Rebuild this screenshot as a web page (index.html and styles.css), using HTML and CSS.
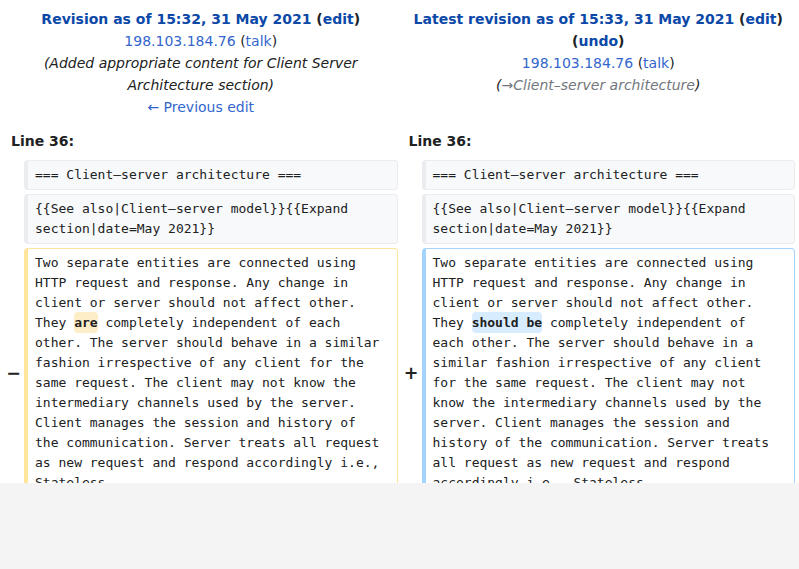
FILE: index.html
```html
<!DOCTYPE html>
<html lang="en">
<head>
<meta charset="utf-8">
<title>Difference between revisions</title>
<link rel="stylesheet" href="styles.css">
</head>
<body>
<div class="page">
  <div class="diff">
    <div class="hdr hdr-old">
      <div class="title"><a href="#" class="rev">Revision as of 15:32, 31 May 2021</a> (<a href="#" class="rev">edit</a>)</div>
      <div><a href="#">198.103.184.76</a> (<a href="#">talk</a>)</div>
      <div class="comment">(Added appropriate content for Client Server Architecture section)</div>
      <div><a href="#">← Previous edit</a></div>
    </div>
    <div class="hdr hdr-new">
      <div class="title"><a href="#" class="rev">Latest revision as of 15:33, 31 May 2021</a> (<a href="#" class="rev">edit</a>) (<a href="#" class="rev">undo</a>)</div>
      <div><a href="#">198.103.184.76</a> (<a href="#">talk</a>)</div>
      <div class="comment">(<span class="auto">→Client–server architecture</span>)</div>
    </div>

    <div class="lineno lineno-old">Line 36:</div>
    <div class="lineno lineno-new">Line 36:</div>

    <div class="marker"></div>
    <div class="cell ctx">=== Client–server architecture ===</div>
    <div class="marker"></div>
    <div class="cell ctx">=== Client–server architecture ===</div>

    <div class="marker"></div>
    <div class="cell ctx">{{See also|Client–server model}}{{Expand section|date=May 2021}}</div>
    <div class="marker"></div>
    <div class="cell ctx">{{See also|Client–server model}}{{Expand section|date=May 2021}}</div>

    <div class="marker">−</div>
    <div class="cell del">Two separate entities are connected using HTTP request and response. Any change in client or server should not affect other. They <del class="word">are</del> completely independent of each other. The server should behave in a similar fashion irrespective of any client for the same request. The client may not know the intermediary channels used by the server. Client manages the session and history of the communication. Server treats all request as new request and respond accordingly i.e., Stateless.</div>
    <div class="marker">+</div>
    <div class="cell add">Two separate entities are connected using HTTP request and response. Any change in client or server should not affect other. They <ins class="word">should be</ins> completely independent of each other. The server should behave in a similar fashion irrespective of any client for the same request. The client may not know the intermediary channels used by the server. Client manages the session and history of the communication. Server treats all request as new request and respond accordingly i.e., Stateless.</div>
  </div>
</div>
</body>
</html>
```
FILE: styles.css
```css
html, body {
  margin: 0;
  padding: 0;
}
body {
  background: #f4f4f4;
  font-family: "DejaVu Sans", sans-serif;
  font-size: 14px;
  color: #202122;
}
.page {
  height: 483px;
  overflow: hidden;
  background: #ffffff;
}
.diff {
  display: grid;
  grid-template-columns: 20px 1fr 24px 1fr;
  row-gap: 4px;
  padding: 4px 4px 0;
}
a {
  color: #3366cc;
  text-decoration: none;
}
.hdr {
  text-align: center;
  line-height: 22px;
  padding: 4px 8px 0;
}
.hdr-old {
  grid-column: 1 / 3;
}
.hdr-new {
  grid-column: 3 / 5;
  padding-left: 12px;
}
.title {
  font-weight: bold;
}
.title a.rev {
  color: #0b48a8;
}
.comment {
  font-style: italic;
}
.auto {
  color: #72777d;
}
.lineno {
  font-weight: bold;
  line-height: 22px;
  padding: 8px 7px 4px;
}
.lineno-old {
  grid-column: 1 / 3;
}
.lineno-new {
  grid-column: 3 / 5;
  padding-left: 11px;
}
.marker {
  align-self: center;
  text-align: right;
  padding-right: 3px;
  font-weight: bold;
  font-size: 17.5px;
  line-height: 1.2;
}
.cell {
  font-family: "DejaVu Sans Mono", monospace;
  font-size: 13px;
  line-height: 20px;
  white-space: pre-wrap;
  overflow-wrap: break-word;
  border-style: solid;
  border-width: 1px 1px 1px 4px;
  border-radius: 4px;
  padding: 4px 12px 4px 7px;
  min-width: 0;
}
.ctx {
  background: #f8f9fa;
  border-color: #eaecf0;
}
.del {
  background: #ffffff;
  border-color: #ffe49c;
}
.add {
  background: #ffffff;
  border-color: #a3d3ff;
}
.word {
  text-decoration: none;
  font-weight: bold;
  border-radius: 4px;
  padding: 3px 0;
}
del.word {
  background: #feeec8;
}
ins.word {
  background: #d8ecff;
}
```
